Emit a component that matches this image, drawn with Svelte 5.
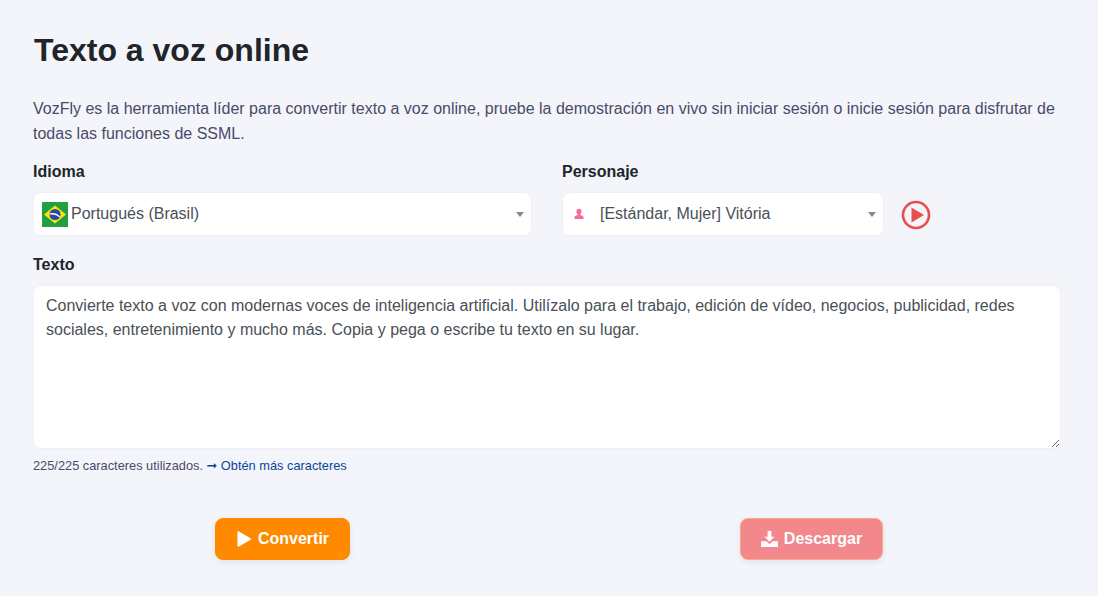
<script lang="ts">
	let text = $state(
		'Convierte texto a voz con modernas voces de inteligencia artificial. Utilízalo para el trabajo, edición de vídeo, negocios, publicidad, redes sociales, entretenimiento y mucho más. Copia y pega o escribe tu texto en su lugar.'
	);
</script>

<main class="page">
	<h1>Texto a voz online</h1>
	<p class="intro">
		VozFly es la herramienta líder para convertir texto a voz online, pruebe la demostración en vivo sin iniciar sesión o inicie sesión para disfrutar de todas las funciones de SSML.
	</p>

	<div class="selectors">
		<div class="field lang">
			<div class="label">Idioma</div>
			<div class="select">
				<svg class="flag" viewBox="0 0 26 25" width="26" height="25" aria-hidden="true">
					<rect width="26" height="25" fill="#229e45" />
					<path d="M13 3.5 24 12.5 13 21.5 2 12.5Z" fill="#f8e509" />
					<circle cx="13" cy="12.5" r="5.6" fill="#2b49a3" />
					<path d="M7.6 11.4c4-.9 7.6.3 10.6 3l-.5 1.1c-3-2.6-6.3-3.6-10.2-2.9Z" fill="#fff" />
				</svg>
				<span>Portugués (Brasil)</span>
				<i class="caret"></i>
			</div>
		</div>

		<div class="field voice">
			<div class="label">Personaje</div>
			<div class="select">
				<svg class="person" viewBox="0 0 12 12" width="12" height="12" aria-hidden="true">
					<path d="M6 .8c1.7 0 2.6 1.2 2.6 2.7 0 1.1-.5 2.1-1.3 2.7v.9c1.3.4 3 1 3.2 1.9v2H1.500v-2c.2-.9 1.900-1.500 3.200-1.900v-.9C3.900 5.600 3.400 4.600 3.400 3.500 3.400 2 4.300.8 6 .8Z" fill="#f76d9e" />
				</svg>
				<span>[Estándar, Mujer] Vitória</span>
				<i class="caret"></i>
			</div>
		</div>

		<button class="preview" aria-label="Escuchar">
			<svg viewBox="0 0 30 30" width="30" height="30" aria-hidden="true">
				<circle cx="15" cy="15" r="13" fill="none" stroke="#e5504f" stroke-width="2.600" />
				<path d="M10.500 7.500 23 15 10.500 22.500Z" fill="#e5504f" />
			</svg>
		</button>
	</div>

	<label class="label" for="texto">Texto</label>
	<textarea id="texto" bind:value={text}></textarea>
	<div class="usage">
		225/225 caracteres utilizados.
		<a href="#planes"><span class="arrow">➞</span> Obtén más caracteres</a>
	</div>

	<div class="actions">
		<button class="btn convert">
			<svg viewBox="0 0 16 16" width="16" height="16" aria-hidden="true">
				<path d="M1.500 1.200c0-.8.800-1.200 1.500-.8l11.500 6.800c.6.400.6 1.200 0 1.600L3 15.600c-.7.400-1.500 0-1.500-.8Z" fill="#fff" />
			</svg>
			Convertir
		</button>
		<button class="btn download">
			<svg viewBox="0 0 18 17" width="17" height="16" aria-hidden="true">
				<path d="M7 0h4v6h3.300L9 11.500 3.700 6H7ZM0 11h5.600L9 14.200 12.400 11H18v6H0Z" fill="#fff" />
			</svg>
			Descargar
		</button>
	</div>
</main>

<style>
	:global(body) {
		background: #f3f5fb;
		font-family: 'Liberation Sans', Arial, sans-serif;
	}

	.page {
		box-sizing: border-box;
		height: 596px;
		padding: 32px 37px 0 33px;
		overflow: hidden;
	}

	h1 {
		margin: 0 0 28px 1px;
		font-size: 32px;
		line-height: 36px;
		font-weight: 700;
		color: #212529;
	}

	.intro {
		margin: 0 0 15px;
		font-size: 16px;
		line-height: 25px;
		color: #4a4a68;
	}

	.selectors {
		display: flex;
		align-items: flex-end;
	}

	.field {
		display: flex;
		flex-direction: column;
	}

	.lang {
		width: 499px;
		margin-right: 30px;
	}

	.voice {
		width: 322px;
		margin-right: 17px;
	}

	.label {
		display: block;
		font-size: 16px;
		line-height: 22px;
		font-weight: 700;
		color: #212529;
		margin-bottom: 9px;
	}

	.select {
		display: flex;
		align-items: center;
		height: 44px;
		box-sizing: border-box;
		padding: 0 8px;
		background: #fff;
		border: 1px solid #eef0f6;
		border-radius: 8px;
		font-size: 16px;
		color: #495057;
	}

	.select span {
		flex: 1;
	}

	.flag {
		margin-right: 3px;
	}

	.person {
		margin: 0 15px 0 2px;
	}

	.caret {
		width: 0;
		height: 0;
		margin-right: -1px;
		border-left: 4px solid transparent;
		border-right: 4px solid transparent;
		border-top: 5px solid #888;
	}

	.preview {
		display: flex;
		padding: 0;
		margin-bottom: 6px;
		border: 0;
		background: none;
	}

	.selectors + .label {
		margin: 18px 0 9px;
	}

	textarea {
		display: block;
		box-sizing: border-box;
		width: 1028px;
		height: 164px;
		padding: 8px 12px;
		background: #fff;
		border: 1px solid #eef0f6;
		border-radius: 8px;
		font-family: inherit;
		font-size: 16px;
		line-height: 24px;
		color: #495057;
		outline: none;
	}

	.usage {
		margin-top: 9px;
		font-size: 12.8px;
		line-height: 16px;
		color: #4a4a68;
	}

	.usage a {
		color: #0a4595;
		text-decoration: none;
	}

	.arrow {
		font-family: 'DejaVu Sans', sans-serif;
	}

	.actions {
		display: grid;
		grid-template-columns: 1fr 1fr;
		column-gap: 30px;
		justify-items: center;
		margin-top: 44px;
	}

	.btn {
		display: flex;
		align-items: center;
		gap: 6px;
		height: 42px;
		box-sizing: border-box;
		padding: 0 20px;
		border-radius: 8px;
		font-family: inherit;
		font-size: 16px;
		font-weight: 700;
		color: #fff;
		box-shadow: 0 2px 6px rgba(0, 0, 0, 0.08);
	}

	.convert {
		background: #ff8a00;
		border: 1px solid #ff8a00;
	}

	.download {
		background: #f2878c;
		border: 1px solid #f7a98a;
	}
</style>
